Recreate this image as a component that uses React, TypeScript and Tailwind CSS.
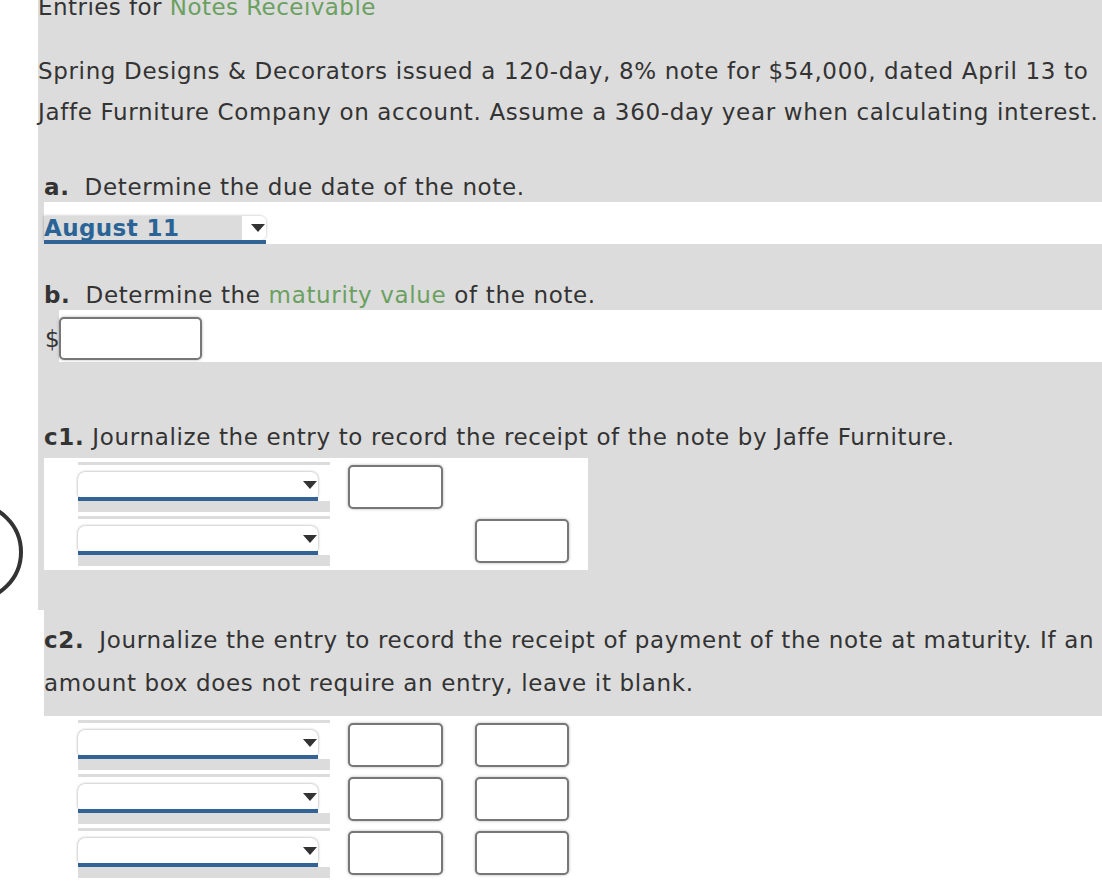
import React from "react";

const GRAY = "bg-[#dcdcdc]";

function Arrow() {
  return (
    <svg width="14" height="8" viewBox="0 0 14 8" className="block">
      <polygon points="0,0 14,0 7,8" fill="#333" />
    </svg>
  );
}

function SelectCell() {
  return (
    <div className="w-[252px] h-[50px] flex flex-col">
      <div className={`h-[3px] ${GRAY}`} />
      <div className="h-[7px]" />
      <div className="w-[240px] h-[25px] bg-white rounded-t-[7px] rounded-b-[3px] shadow-[0_0_3px_rgba(0,0,0,0.4)] flex items-center justify-end pr-[1px]">
        <Arrow />
      </div>
      <div className="w-[240px] h-[4px] bg-[#336395]" />
      <div className={`flex-1 ${GRAY}`} />
    </div>
  );
}

function Box({ w = 95 }: { w?: number }) {
  return (
    <div
      className={`h-[44px] bg-white border-2 border-[#777] rounded-[5px] shadow-[0_0_3px_rgba(0,0,0,0.3)] ${
        w === 95 ? "w-[95px]" : "w-[94px]"
      }`}
    />
  );
}

function EntryRow({ col1, col2 }: { col1: boolean; col2: boolean }) {
  return (
    <div className="flex h-[50px]">
      <SelectCell />
      <div className="ml-[18px] w-[95px] pt-[3px]">{col1 && <Box />}</div>
      <div className="ml-[32px] w-[94px] pt-[3px]">{col2 && <Box w={94} />}</div>
    </div>
  );
}

export default function App() {
  return (
    <div
      className="relative w-[1102px] h-[886px] bg-white overflow-hidden text-[#333] text-[23px] tracking-[0.65px]"
      style={{ fontFamily: '"DejaVu Sans", Verdana, sans-serif' }}
    >
      <svg className="absolute left-0 top-[500px]" width="30" height="110" viewBox="0 0 30 110">
        <circle cx="-27" cy="52" r="48" fill="none" stroke="#333" strokeWidth="4" />
      </svg>

      <div className={`ml-[38px] ${GRAY}`}>
        <div className="-mt-[7px] h-[28px] leading-[28px] whitespace-nowrap tracking-[0.45px]">
          Entries for <span className="text-[#6aa060]">Notes Receivable</span>
        </div>
        <div className="mt-[30px] leading-[41px] whitespace-nowrap">
          <div>Spring Designs &amp; Decorators issued a 120-day, 8% note for $54,000, dated April 13 to</div>
          <div>Jaffe Furniture Company on account. Assume a 360-day year when calculating interest.</div>
        </div>

        <div className="mt-[40px] ml-[6px] h-[29px] leading-[29px] whitespace-nowrap">
          <span className="font-bold">a.</span>
          <span className="ml-[15px]">Determine the due date of the note.</span>
        </div>
        <div className="ml-[6px] h-[42px] bg-white pt-[14px]">
          <div className="w-[222px] h-[28px] flex flex-col">
            <div className="h-[24px] flex rounded-r-[6px] shadow-[0_0_3px_rgba(0,0,0,0.3)] overflow-hidden">
              <div className={`w-[198px] h-full ${GRAY} leading-[24px] font-bold text-[#2a6496] whitespace-nowrap tracking-[0.4px]`}>
                August 11
              </div>
              <div className="flex-1 bg-white flex items-center justify-end pr-[1px]">
                <Arrow />
              </div>
            </div>
            <div className="h-[4px] bg-[#336395]" />
          </div>
        </div>

        <div className="mt-[37px] ml-[6px] h-[29px] leading-[29px] whitespace-nowrap">
          <span className="font-bold">b.</span>
          <span className="ml-[15px]">
            Determine the <span className="text-[#6aa060]">maturity value</span> of the note.
          </span>
        </div>
        <div className="flex h-[52px]">
          <div className="w-[21px] pl-[7px] h-[52px] leading-[58px]">$</div>
          <div className="flex-1 bg-white pt-[7px]">
            <div className="w-[143px] h-[43px] bg-white border-2 border-[#777] rounded-[5px] shadow-[0_0_3px_rgba(0,0,0,0.3)]" />
          </div>
        </div>

        <div className="mt-[61px] ml-[6px] h-[29px] leading-[29px] whitespace-nowrap">
          <span className="font-bold">c1.</span>
          <span className="ml-[8px]">Journalize the entry to record the receipt of the note by Jaffe Furniture.</span>
        </div>
        <div className="mt-[6px] ml-[6px] w-[544px] h-[112px] bg-white pt-[4px] pl-[34px] flex flex-col gap-[4px]">
          <EntryRow col1={true} col2={false} />
          <EntryRow col1={false} col2={true} />
        </div>
        <div className="h-[40px]" />
      </div>

      <div className={`ml-[44px] h-[106px] ${GRAY} pt-[9px] leading-[43px] whitespace-nowrap`}>
        <div>
          <span className="font-bold">c2.</span>
          <span className="ml-[15px]">
            Journalize the entry to record the receipt of payment of the note at maturity. If an
          </span>
        </div>
        <div>amount box does not require an entry, leave it blank.</div>
      </div>

      <div className="ml-[78px] pt-[4px] flex flex-col gap-[4px]">
        <EntryRow col1={true} col2={true} />
        <EntryRow col1={true} col2={true} />
        <EntryRow col1={true} col2={true} />
      </div>
    </div>
  );
}
